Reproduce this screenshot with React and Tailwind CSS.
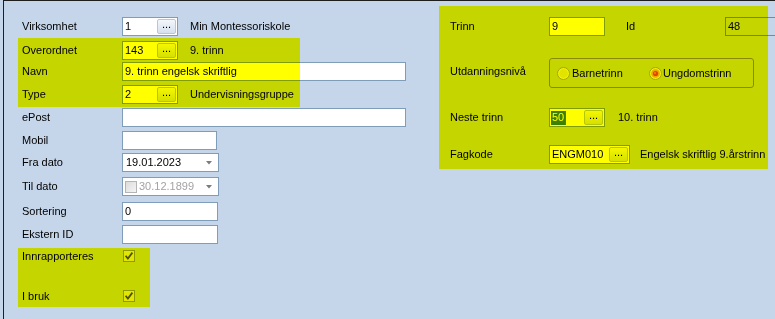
import React from 'react';

function DotsButton() {
  return (
    <span className="my-[1px] mr-[1px] flex w-[19px] shrink-0 items-end justify-center rounded-[2px] border border-[#b7c6da] bg-linear-to-b from-[#f4f7fb] to-[#d6e0ee] pb-[3px] text-[11px] leading-none">
      ...
    </span>
  );
}

function Lookup({ width, children }) {
  return (
    <div className={`flex h-[19px] shrink-0 border border-[#7f9db9] bg-white ${width}`}>
      <span className="flex flex-1 items-center pl-[2px]">{children}</span>
      <DotsButton />
    </div>
  );
}

function TextBox({ width, children }) {
  return (
    <div className={`flex h-[19px] shrink-0 items-center border border-[#7f9db9] bg-white pl-[2px] ${width}`}>
      {children}
    </div>
  );
}

function DropArrow() {
  return (
    <svg width="6" height="4" viewBox="0 0 6 4" className="mr-[6px]">
      <polygon points="0,0 6,0 3,3.5" fill="#7b7b7b" />
    </svg>
  );
}

function Check() {
  return (
    <span className="flex h-[12px] w-[12px] items-center justify-center border border-[#8f99a3] bg-[#e2e6ea]">
      <svg width="10" height="10" viewBox="0 0 10 10">
        <path d="M1.6 4.8 L3.9 7.6 L8.4 1.6" fill="none" stroke="#4b525a" strokeWidth="1.8" />
      </svg>
    </span>
  );
}

function Radio({ on }) {
  return (
    <svg width="13" height="13" viewBox="0 0 13 13">
      <circle cx="6.5" cy="6.5" r="6" fill="#f2f3f4" stroke="#a3a6a8" />
      <circle cx="6.5" cy="6.5" r="4.4" fill="#e2e4e6" />
      {on && (
        <>
          <circle cx="6.5" cy="6.5" r="4.3" fill="#f6a43a" />
          <circle cx="6.5" cy="6.5" r="2.6" fill="#d84a10" />
          <circle cx="6" cy="6" r="1" fill="#f58a40" />
        </>
      )}
    </svg>
  );
}

function Row({ label, h, children }) {
  return (
    <div className={`flex items-start ${h}`}>
      <div className="flex h-[19px] w-[100px] shrink-0 items-center">{label}</div>
      {children}
    </div>
  );
}

function Side({ children }) {
  return <span className="flex h-[19px] shrink-0 items-center whitespace-nowrap pl-[12px]">{children}</span>;
}

function Highlight({ className }) {
  return <div className={`pointer-events-none absolute bg-[#ffff00] mix-blend-multiply ${className}`} />;
}

export default function App() {
  return (
    <div className="relative h-[319px] w-[775px] overflow-hidden bg-[#c5d5ea] font-['Liberation_Sans',Arial,sans-serif] text-[11px] leading-none text-black">
      <div className="ml-[3px] flex h-[320px] border-l border-t border-[#1e1e1e]">
        {/* left form */}
        <div className="w-[435px] shrink-0 pl-[18px] pt-[16px]">
          <Row label="Virksomhet" h="h-[24px]">
            <Lookup width="w-[56px]">1</Lookup>
            <Side>Min Montessoriskole</Side>
          </Row>

          <div className="relative">
            <Highlight className="left-[-4px] top-[-3px] h-[69px] w-[282px]" />
            <Row label="Overordnet" h="h-[21px]">
              <Lookup width="w-[56px]">143</Lookup>
              <Side>9. trinn</Side>
            </Row>
            <Row label="Navn" h="h-[23px]">
              <TextBox width="w-[284px]">9. trinn engelsk skriftlig</TextBox>
            </Row>
            <Row label="Type" h="h-[23px]">
              <Lookup width="w-[56px]">2</Lookup>
              <Side>Undervisningsgruppe</Side>
            </Row>
          </div>

          <Row label="ePost" h="h-[23px]">
            <TextBox width="w-[284px]" />
          </Row>
          <Row label="Mobil" h="h-[22px]">
            <TextBox width="w-[95px]" />
          </Row>
          <Row label="Fra dato" h="h-[24px]">
            <div className="flex h-[19px] w-[97px] items-center justify-between border border-[#7f9db9] bg-white pl-[3px]">
              <span>19.01.2023</span>
              <DropArrow />
            </div>
          </Row>
          <Row label="Til dato" h="h-[25px]">
            <div className="flex h-[19px] w-[97px] items-center border border-[#7f9db9] bg-white pl-[2px]">
              <span className="h-[12px] w-[12px] border border-[#b4b4b4] bg-linear-to-br from-[#dcdcdc] to-[#f4f4f4]" />
              <span className="ml-[2px] flex-1 text-[#a3a3a3]">30.12.1899</span>
              <DropArrow />
            </div>
          </Row>
          <Row label="Sortering" h="h-[23px]">
            <TextBox width="w-[96px]">0</TextBox>
          </Row>
          <Row label="Ekstern ID" h="h-[23px]">
            <TextBox width="w-[96px]" />
          </Row>

          <div className="relative pt-[2px]">
            <Highlight className="left-[-4px] top-0 h-[59px] w-[132px]" />
            <div className="flex h-[40px] items-start">
              <span className="flex h-[12px] w-[101px] items-center">Innrapporteres</span>
              <Check />
            </div>
            <div className="flex h-[12px] items-start">
              <span className="flex h-[12px] w-[101px] items-center">I bruk</span>
              <Check />
            </div>
          </div>
        </div>

        {/* right panel */}
        <div className="relative mt-[5px] h-[163px] w-[329px] shrink-0 pl-[11px] pt-[11px]">
          <div className="flex h-[41px] items-start">
            <span className="flex h-[19px] w-[99px] shrink-0 items-center">Trinn</span>
            <TextBox width="w-[56px]">9</TextBox>
            <span className="ml-[21px] flex h-[19px] w-[99px] shrink-0 items-center">Id</span>
            <div className="flex h-[19px] w-[70px] shrink-0 items-center border border-[#858585] pl-[2px]">48</div>
          </div>

          <div className="flex h-[50px] items-start">
            <span className="flex h-[26px] w-[99px] shrink-0 items-center">Utdanningsnivå</span>
            <div className="flex h-[30px] w-[205px] shrink-0 items-center rounded-[3px] border border-[#8a8a8a] pl-[7px]">
              <span className="flex w-[92px] items-center gap-[2px]">
                <Radio />
                Barnetrinn
              </span>
              <span className="flex items-center gap-[1px]">
                <Radio on />
                Ungdomstrinn
              </span>
            </div>
          </div>

          <div className="flex h-[37px] items-start">
            <span className="flex h-[19px] w-[99px] shrink-0 items-center">Neste trinn</span>
            <div className="flex h-[19px] w-[56px] shrink-0 border border-[#7f9db9] bg-white">
              <span className="flex flex-1 items-center pl-[1px]">
                <span className="flex h-[14px] items-center bg-[#3d80e0] px-[1px] text-white">50</span>
                <span className="h-[14px] w-[1px] bg-[#e03a00]" />
              </span>
              <DotsButton />
            </div>
            <span className="flex h-[19px] shrink-0 items-center pl-[13px]">10. trinn</span>
          </div>

          <div className="flex items-start">
            <span className="flex h-[19px] w-[99px] shrink-0 items-center">Fagkode</span>
            <Lookup width="w-[81px]">ENGM010</Lookup>
            <span className="flex h-[19px] shrink-0 items-center whitespace-nowrap pl-[10px]">Engelsk skriftlig 9.årstrinn</span>
          </div>

          <Highlight className="inset-0" />
        </div>
      </div>
    </div>
  );
}
